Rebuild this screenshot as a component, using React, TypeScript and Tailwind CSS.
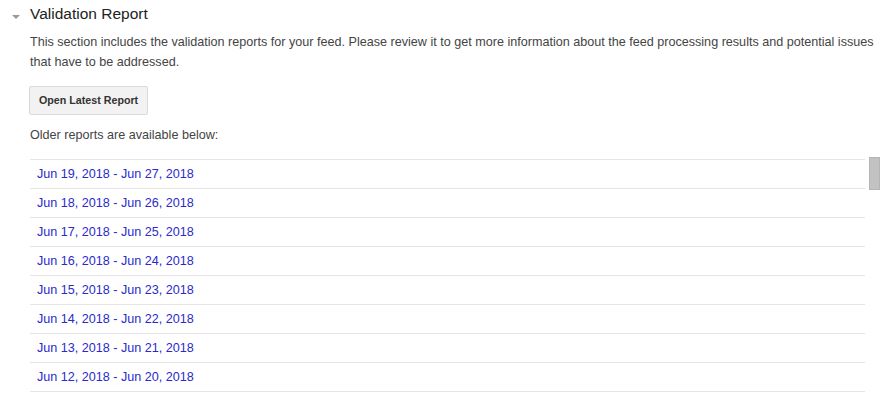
import React from 'react';

const reports = [
  'Jun 19, 2018 - Jun 27, 2018',
  'Jun 18, 2018 - Jun 26, 2018',
  'Jun 17, 2018 - Jun 25, 2018',
  'Jun 16, 2018 - Jun 24, 2018',
  'Jun 15, 2018 - Jun 23, 2018',
  'Jun 14, 2018 - Jun 22, 2018',
  'Jun 13, 2018 - Jun 21, 2018',
  'Jun 12, 2018 - Jun 20, 2018',
];

export default function App() {
  return (
    <div className="w-[895px] h-[400px] overflow-hidden bg-white font-['Liberation_Sans',Arial,sans-serif]">
      {/* Section header */}
      <div className="flex items-center h-[26px] pt-[1px]">
        <div className="w-[30px] flex justify-center pl-[2px] pt-[6px]">
          <div className="w-0 h-0 border-l-[4px] border-r-[4px] border-t-[4px] border-l-transparent border-r-transparent border-t-[#9a9a9a]" />
        </div>
        <h2 className="text-[15.5px] text-[#222] leading-[20px]">Validation Report</h2>
      </div>

      <div className="pl-[30px]">
        <p className="text-[12.6px] leading-[20px] text-[#444] pr-[14px] mt-[6px]">
          This section includes the validation reports for your feed. Please review it to get more information about the feed processing results and potential issues that have to be addressed.
        </p>

        <button className="mt-[14px] ml-[-1px] h-[29px] px-[9px] bg-[#f2f2f2] border border-[#dadada] rounded-[2px] text-[10.7px] font-bold text-[#333]">
          Open Latest Report
        </button>

        <p className="mt-[12px] text-[12.6px] leading-[16px] text-[#444]">Older reports are available below:</p>

        <div className="flex mt-[16px]">
          <ul className="w-[835px] border-t border-[#e5e5e5]">
            {reports.map((r) => (
              <li key={r} className="h-[29px] border-b border-[#e5e5e5] flex items-center pl-[7px]">
                <a href="#" className="text-[12.6px] text-[#2a2acb]">{r}</a>
              </li>
            ))}
          </ul>
          <div className="ml-[4px] w-[12px]">
            <div className="mt-[-2px] h-[33px] w-[11px] bg-[#c2c2c2] border border-[#b5b5b5]" />
          </div>
        </div>
      </div>
    </div>
  );
}
